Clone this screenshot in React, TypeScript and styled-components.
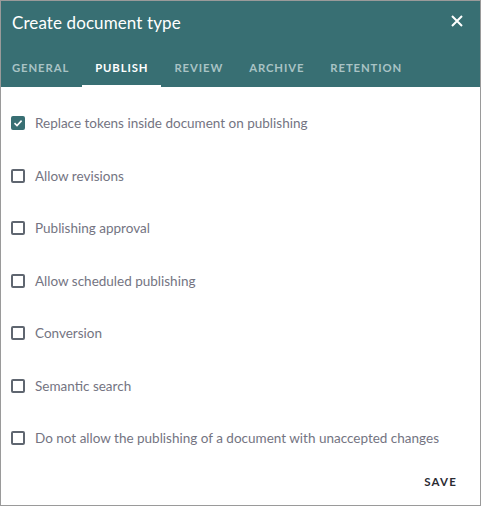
import React, { useState } from "react";
import styled, { createGlobalStyle } from "styled-components";

const GlobalStyle = createGlobalStyle`
  html, body { margin: 0; padding: 0; background: #ffffff; }
  body { font-family: "Lato", "Liberation Sans", sans-serif; }
  * { box-sizing: border-box; }
`;

const Dialog = styled.div`
  width: 481px;
  height: 506px;
  border: 1px solid #9a9a9a;
  display: flex;
  flex-direction: column;
  background: #ffffff;
`;

const Header = styled.header`
  background: #386f73;
  height: 86px;
  display: flex;
  flex-direction: column;
`;

const TitleRow = styled.div`
  height: 42px;
  display: flex;
  align-items: center;
  justify-content: space-between;
  padding: 0 14px 0 11px;
`;

const Title = styled.h1`
  margin: 0;
  font-size: 17px;
  font-weight: 400;
  color: #ffffff;
  letter-spacing: 0.1px;
`;

const CloseBtn = styled.button`
  border: none;
  background: transparent;
  padding: 0;
  width: 16px;
  height: 16px;
  display: flex;
  cursor: pointer;
`;

const Tabs = styled.nav`
  margin-top: auto;
  display: flex;
`;

const Tab = styled.button<{ $active?: boolean }>`
  border: none;
  background: transparent;
  height: 44px;
  padding: 6px 13px 0;
  font-family: inherit;
  font-size: 11.3px;
  font-weight: 700;
  letter-spacing: 0.9px;
  color: ${(p) => (p.$active ? "#ffffff" : "#a9c3c5")};
  border-bottom: 2px solid ${(p) => (p.$active ? "#ffffff" : "transparent")};
  cursor: pointer;
  &:first-child {
    padding-left: 11px;
  }
`;

const Body = styled.div`
  flex: 1;
  display: flex;
  flex-direction: column;
  padding: 10px 0 0 10px;
`;

const Row = styled.label`
  height: 52.5px;
  display: flex;
  align-items: center;
  gap: 10px;
  cursor: pointer;
  font-size: 13.5px;
  color: #747482;
`;

const Box = styled.span<{ $checked?: boolean }>`
  width: 14px;
  height: 14px;
  border-radius: 2px;
  border: 2px solid ${(p) => (p.$checked ? "#386f73" : "#5f6670")};
  background: ${(p) => (p.$checked ? "#386f73" : "transparent")};
  display: flex;
  align-items: center;
  justify-content: center;
`;

const Footer = styled.div`
  display: flex;
  justify-content: flex-end;
  padding: 0 23px 17px 0;
  margin-top: auto;
`;

const SaveBtn = styled.button`
  border: none;
  background: transparent;
  font-family: inherit;
  font-size: 11.5px;
  font-weight: 700;
  letter-spacing: 1.2px;
  color: #2b2b33;
  cursor: pointer;
  padding: 0;
`;

const options = [
  "Replace tokens inside document on publishing",
  "Allow revisions",
  "Publishing approval",
  "Allow scheduled publishing",
  "Conversion",
  "Semantic search",
  "Do not allow the publishing of a document with unaccepted changes",
];

const tabs = ["GENERAL", "PUBLISH", "REVIEW", "ARCHIVE", "RETENTION"];

const App = () => {
  const [checked, setChecked] = useState<boolean[]>(options.map((_, i) => i === 0));
  const [tab, setTab] = useState(1);

  const toggle = (i: number) =>
    setChecked((prev) => prev.map((v, j) => (j === i ? !v : v)));

  return (
    <>
      <GlobalStyle />
      <Dialog>
        <Header>
          <TitleRow>
            <Title>Create document type</Title>
            <CloseBtn aria-label="close">
              <svg width="14" height="14" viewBox="0 0 14 14">
                <path d="M2 2L12 12M12 2L2 12" stroke="#fff" strokeWidth="2" />
              </svg>
            </CloseBtn>
          </TitleRow>
          <Tabs>
            {tabs.map((t, i) => (
              <Tab key={t} $active={tab === i} onClick={() => setTab(i)}>
                {t}
              </Tab>
            ))}
          </Tabs>
        </Header>
        <Body>
          {options.map((o, i) => (
            <Row key={o} onClick={() => toggle(i)}>
              <Box $checked={checked[i]}>
                {checked[i] && (
                  <svg width="10" height="10" viewBox="0 0 10 10">
                    <path d="M1.5 5.2L4 7.6L8.6 2.6" stroke="#fff" strokeWidth="1.6" fill="none" />
                  </svg>
                )}
              </Box>
              {o}
            </Row>
          ))}
        </Body>
        <Footer>
          <SaveBtn>SAVE</SaveBtn>
        </Footer>
      </Dialog>
    </>
  );
};

export default App;
